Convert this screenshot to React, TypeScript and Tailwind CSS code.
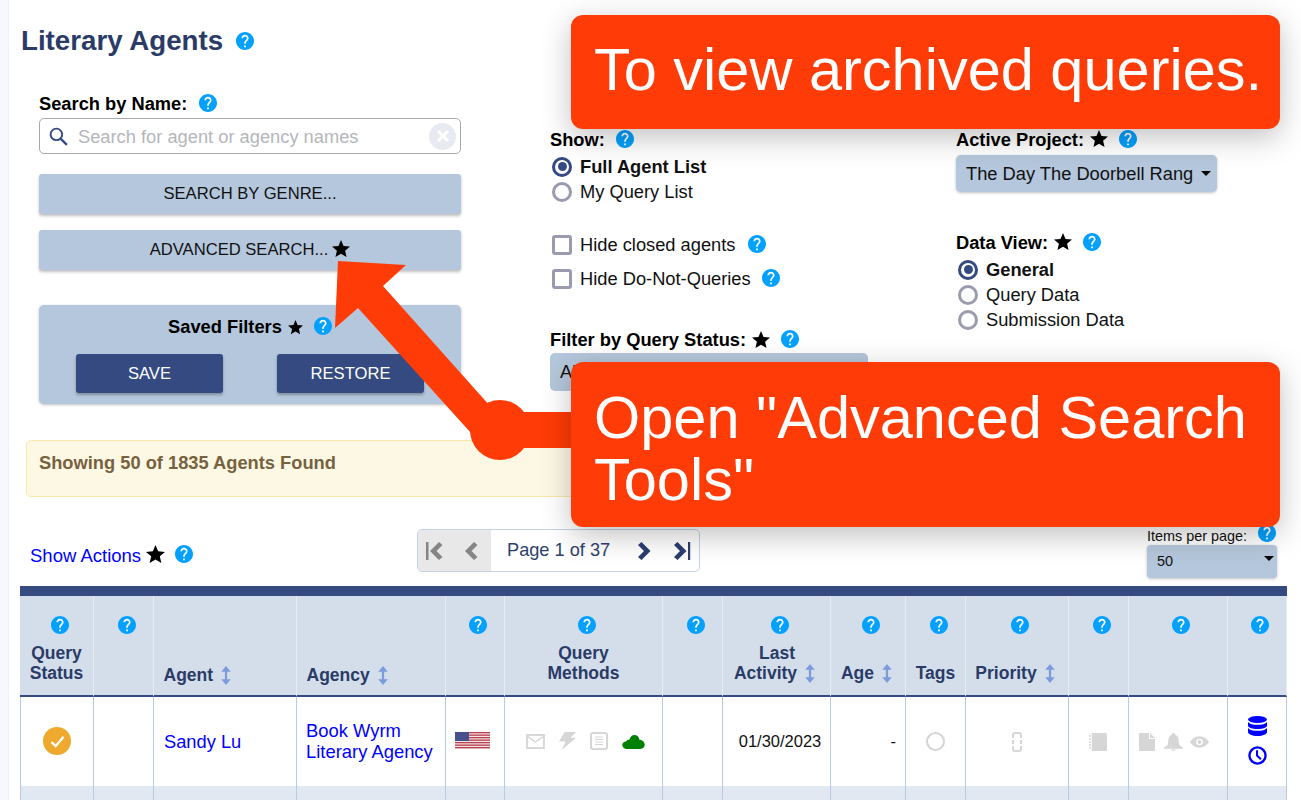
import type { ReactNode } from 'react';

function Help({ className = '' }: { className?: string }) {
  return (
    <svg viewBox="2 2 20 20" className={`w-[18px] h-[18px] shrink-0 ${className}`}>
      <circle cx="12" cy="12" r="8" fill="#fff" />
      <path
        fill="#03a1ff"
        d="M12 2C6.48 2 2 6.48 2 12s4.48 10 10 10 10-4.48 10-10S17.52 2 12 2zm1 17h-2v-2h2v2zm2.07-7.75l-.9.92C13.45 12.9 13 13.5 13 15h-2v-.5c0-1.1.45-2.1 1.17-2.83l1.24-1.26c.37-.36.59-.86.59-1.41 0-1.1-.9-2-2-2s-2 .9-2 2H8c0-2.21 1.79-4 4-4s4 1.79 4 4c0 .88-.36 1.68-.93 2.25z"
      />
    </svg>
  );
}

function Star({ className = 'w-[20px] h-[20px]' }: { className?: string }) {
  return (
    <svg viewBox="2 2 20 20" className={`shrink-0 ${className}`}>
      <path fill="#000" d="M12 17.27L18.18 21l-1.64-7.03L22 9.24l-7.19-.61L12 2 9.19 8.63 2 9.24l5.46 4.73L5.82 21z" />
    </svg>
  );
}

function Sort() {
  return (
    <svg viewBox="0 0 10 20" className="w-[10px] h-[19px] shrink-0">
      <path fill="#7c9bdc" d="M5 0l5 6H6.2v8H10l-5 6-5-6h3.8V6H0z" />
    </svg>
  );
}

function Caret() {
  return (
    <svg viewBox="0 0 10 5" className="w-[10px] h-[5px] shrink-0">
      <path fill="#000" d="M0 0h10L5 5z" />
    </svg>
  );
}

function Radio({ checked, label }: { checked?: boolean; label: string }) {
  return (
    <div className="flex items-center h-[25px]">
      <div
        className={`w-[20px] h-[20px] rounded-full border-[3px] flex items-center justify-center ml-[2px] ${
          checked ? 'border-[#344a80]' : 'border-[#9a9bae]'
        }`}
      >
        {checked && <div className="w-[9px] h-[9px] rounded-full bg-[#344a80]" />}
      </div>
      <span className={`ml-[8px] text-[18.3px] text-[#111] ${checked ? 'font-bold' : ''}`}>{label}</span>
    </div>
  );
}

function Check({ label, gap }: { label: string; gap: string }) {
  return (
    <div className="flex items-center h-[34px]">
      <div className="w-[20px] h-[20px] rounded-[3px] border-[3px] border-[#9a9bae] ml-[2px]" />
      <span className="ml-[8px] text-[18.3px] text-[#111]">{label}</span>
      <Help className={gap} />
    </div>
  );
}

function Label({ children }: { children: ReactNode }) {
  return <div className="flex items-center h-[22px] text-[18.3px] font-bold text-black">{children}</div>;
}

function HeadCell({ help = true, width, children }: { help?: boolean; width: string; children?: ReactNode }) {
  return (
    <div className={`${width} shrink-0 h-[101px] bg-[#d4deea] border-r border-r-[#e6ecf3] border-b-2 border-b-[#344a80] flex flex-col items-center`}>
      <div className="h-[38px] pt-[20px] pl-[6px]">{help && <Help />}</div>
      <div className="mt-auto mb-[12px] text-[17.5px] leading-[20px] font-bold text-[#2a3b67] text-center">{children}</div>
    </div>
  );
}

function BodyCell({ width, className = '', children }: { width: string; className?: string; children?: ReactNode }) {
  return <div className={`${width} shrink-0 h-[89px] border-r border-r-[#b7cadf] flex items-center ${className}`}>{children}</div>;
}

const widths = [
  'w-[74px]',
  'w-[60px]',
  'w-[143px]',
  'w-[149px]',
  'w-[59px]',
  'w-[158px]',
  'w-[60px]',
  'w-[108px]',
  'w-[75px]',
  'w-[60px]',
  'w-[103px]',
  'w-[60px]',
  'w-[99px]',
  'w-[59px]',
];

function Flag() {
  const stripes = [0, 1, 2, 3, 4, 5, 6];
  return (
    <svg viewBox="0 0 35 17" className="w-[35px] h-[17px]">
      <rect width="35" height="17" fill="#f3e4e6" />
      {stripes.map((s) => (
        <rect key={s} y={s * 2.5} width="35" height="1.3" fill="#b8404f" />
      ))}
      <rect width="14" height="9" fill="#47508a" />
    </svg>
  );
}

export default function App() {
  return (
    <div className="relative flex w-[1301px] h-[800px] overflow-hidden bg-white font-['Liberation_Sans',Arial,sans-serif]">
      <div className="w-[9px] shrink-0 bg-[#f6f8fd] border-r border-r-[#eff2f9]" />

      <div className="flex-1 min-w-0">
        <div className="h-[92px] pl-[12px] pt-[25px] flex items-start">
          <h1 className="text-[27.7px] leading-[32px] font-bold text-[#2a3b67]">Literary Agents</h1>
          <Help className="ml-[13px] mt-[7px]" />
        </div>

        {/* filters */}
        <div className="flex pl-[30px]">
          <div className="w-[422px] shrink-0">
            <div className="flex items-center h-[24px]">
              <span className="text-[18.3px] font-bold text-black">Search by Name:</span>
              <Help className="ml-[12px] -mt-[3px]" />
            </div>
            <div className="mt-[2px] h-[36px] rounded-[5px] border border-[#a9a9a9] flex items-center pl-[8px] pr-[4px]">
              <svg viewBox="0 0 20 20" className="w-[21px] h-[21px] shrink-0">
                <circle cx="8" cy="8" r="5.5" fill="none" stroke="#344a80" strokeWidth="1.8" />
                <path d="M12.2 12.2L18 18" stroke="#344a80" strokeWidth="2.2" />
              </svg>
              <input
                readOnly
                placeholder="Search for agent or agency names"
                className="ml-[9px] pt-[1px] flex-1 min-w-0 text-[18.3px] outline-none placeholder:text-[#b4b6bc]"
              />
              <div className="w-[27px] h-[27px] rounded-full bg-[#e8eaf2] flex items-center justify-center">
                <svg viewBox="0 0 14 14" className="w-[14px] h-[14px]">
                  <path d="M2 2l10 10M12 2L2 12" stroke="#fff" strokeWidth="3" />
                </svg>
              </div>
            </div>
            <div className="mt-[20px] h-[40px] rounded-[3px] bg-[#b5c7dc] shadow-[0_2px_3px_rgba(0,0,0,0.25)] flex items-center justify-center text-[16.6px] text-[#111]">
              SEARCH BY GENRE...
            </div>
            <div className="mt-[16px] h-[40px] rounded-[3px] bg-[#b5c7dc] shadow-[0_2px_3px_rgba(0,0,0,0.25)] flex items-center justify-center text-[16.6px] text-[#111]">
              ADVANCED SEARCH...
              <Star className="w-[18px] h-[18px] ml-[4px] -mt-[2px]" />
            </div>
            <div className="mt-[35px] h-[99px] rounded-[5px] bg-[#b5c7dc] shadow-[0_1px_3px_rgba(0,0,0,0.25)] pt-[11px]">
              <div className="flex items-center justify-center h-[22px] text-[18.3px] font-bold text-black">
                Saved Filters
                <Star className="w-[15px] h-[15px] ml-[6px]" />
                <Help className="ml-[11px] -mt-[2px]" />
              </div>
              <div className="flex mt-[16px] pl-[37px] gap-[54px]">
                <div className="w-[147px] h-[39px] pt-[1px] rounded-[3px] bg-[#344a80] shadow-[0_2px_3px_rgba(0,0,0,0.3)] flex items-center justify-center text-[16.6px] text-white">
                  SAVE
                </div>
                <div className="w-[147px] h-[39px] pt-[1px] rounded-[3px] bg-[#344a80] shadow-[0_2px_3px_rgba(0,0,0,0.3)] flex items-center justify-center text-[16.6px] text-white">
                  RESTORE
                </div>
              </div>
            </div>
          </div>

          <div className="w-[406px] shrink-0 ml-[89px] pt-[37px]">
            <Label>
              Show:
              <Help className="ml-[11px] -mt-[3px]" />
            </Label>
            <div className="mt-[3px]">
              <Radio checked label="Full Agent List" />
              <Radio label="My Query List" />
            </div>
            <div className="mt-[24px]">
              <Check label="Hide closed agents" gap="ml-[12px] -mt-[2px]" />
              <Check label="Hide Do-Not-Queries" gap="ml-[11px] -mt-[3px]" />
            </div>
            <div className="mt-[33px]">
              <Label>
                Filter by Query Status:
                <Star className="w-[18px] h-[18px] ml-[6px] -mt-[1px]" />
                <Help className="ml-[11px] -mt-[2px]" />
              </Label>
            </div>
            <div className="mt-[2px] w-[318px] h-[38px] rounded-[5px] bg-[#b5c7dc] flex items-center pl-[10px] text-[18.3px] text-[#111]">
              All
            </div>
          </div>

          <div className="flex-1 pt-[37px]">
            <Label>
              Active Project:
              <Star className="w-[18px] h-[18px] ml-[6px] -mt-[2px]" />
              <Help className="ml-[11px] -mt-[3px]" />
            </Label>
            <div className="mt-[4px] w-[261px] h-[37px] rounded-[5px] bg-[#b5c7dc] shadow-[0_1px_3px_rgba(0,0,0,0.25)] flex items-center pl-[10px] text-[18.3px] text-[#111]">
              The Day The Doorbell Rang
              <span className="ml-[8px]">
                <Caret />
              </span>
            </div>
            <div className="mt-[40px]">
              <Label>
                Data View:
                <Star className="w-[18px] h-[18px] ml-[6px] -mt-[2px]" />
                <Help className="ml-[11px] -mt-[2px]" />
              </Label>
            </div>
            <div className="mt-[3px]">
              <Radio checked label="General" />
              <Radio label="Query Data" />
              <Radio label="Submission Data" />
            </div>
          </div>
        </div>

        {/* results count */}
        <div className="mt-[36px] ml-[17px] w-[1254px] h-[57px] rounded-[5px] bg-[#fdf8e4] border border-[#f8e9a9] pl-[12px] pt-[8px]">
          <span className="text-[18.3px] font-bold text-[#77623f]">Showing 50 of 1835 Agents Found</span>
        </div>

        {/* actions and paging */}
        <div className="flex h-[89px] pl-[21px]">
          <div className="w-[387px] shrink-0 pt-[48px] flex items-start">
            <a className="text-[18.5px] leading-[22px] text-[#0000ff]">Show Actions</a>
            <Star className="w-[19px] h-[19px] ml-[5px]" />
            <Help className="ml-[10px]" />
          </div>
          <div className="mt-[32px] w-[283px] h-[43px] rounded-[5px] border border-[#c3d2e6] flex items-stretch overflow-hidden">
            <div className="w-[73px] shrink-0 bg-[#e8e8e8] flex items-center pl-[8px]">
              <svg viewBox="0 0 17 18" className="w-[17px] h-[18px]">
                <path fill="#858585" d="M0 0h2.5v18H0zM13 0l3.5 3-6 6 6 6-3.5 3-9-9z" />
              </svg>
              <svg viewBox="0 0 13 18" className="w-[13px] h-[18px] ml-[22px]">
                <path fill="#858585" d="M9 0l3.5 3-6 6 6 6L9 18 0 9z" />
              </svg>
            </div>
            <div className="flex items-center flex-1 pl-[16px] text-[18.2px] text-[#2e3f6e]">
              Page 1 of 37
              <svg viewBox="0 0 13 18" className="w-[13px] h-[18px] ml-[28px]">
                <path fill="#2c3e70" d="M3.5 0l9 9-9 9L0 15l6-6-6-6z" />
              </svg>
              <svg viewBox="0 0 17 18" className="w-[17px] h-[18px] ml-[23px]">
                <path fill="#2c3e70" d="M3.5 0l9 9-9 9L0 15l6-6-6-6zM14 0h2.2v18H14z" />
              </svg>
            </div>
          </div>
          <div className="ml-[447px] w-[130px] shrink-0">
            <div className="flex items-start h-[48px] text-[14.4px] text-[#111] pt-[31px]">
              <span className="leading-[16px]">Items per page:</span>
              <Help className="ml-[11px] -mt-[4px]" />
            </div>
            <div className="h-[33px] rounded-[4px] bg-[#b5c7dc] shadow-[0_1px_3px_rgba(0,0,0,0.25)] flex items-center pl-[10px] pr-[3px] text-[14.5px] text-[#111]">
              50
              <span className="ml-auto -mt-[6px]">
                <Caret />
              </span>
            </div>
          </div>
        </div>

        {/* agents table */}
        <div className="ml-[11px] w-[1267px]">
          <div className="h-[10px] bg-[#344a80]" />
          <div className="flex">
            <HeadCell width={widths[0]}>
              Query
              <br />
              Status
            </HeadCell>
            <HeadCell width={widths[1]} />
            <HeadCell width={widths[2]} help={false}>
              <div className="flex items-center justify-start w-[143px] pl-[10px] gap-[8px] -mb-[2px]">
                Agent <Sort />
              </div>
            </HeadCell>
            <HeadCell width={widths[3]} help={false}>
              <div className="flex items-center justify-start w-[149px] pl-[10px] gap-[8px] -mb-[2px]">
                Agency <Sort />
              </div>
            </HeadCell>
            <HeadCell width={widths[4]} />
            <HeadCell width={widths[5]}>
              Query
              <br />
              Methods
            </HeadCell>
            <HeadCell width={widths[6]} />
            <HeadCell width={widths[7]}>
              <div className="pl-[5px] mr-[4px]">Last</div>
              <div className="flex items-center gap-[8px] mr-[4px]">
                Activity <Sort />
              </div>
            </HeadCell>
            <HeadCell width={widths[8]}>
              <div className="flex items-center gap-[8px] mr-[3px]">
                Age <Sort />
              </div>
            </HeadCell>
            <HeadCell width={widths[9]}>Tags</HeadCell>
            <HeadCell width={widths[10]}>
              <div className="flex items-center gap-[8px] mr-[4px]">
                Priority <Sort />
              </div>
            </HeadCell>
            <HeadCell width={widths[11]} />
            <HeadCell width={widths[12]} />
            <HeadCell width={widths[13]} />
          </div>

          <div className="flex bg-white">
            <BodyCell width={widths[0]} className="justify-center border-l border-l-[#b7cadf] pb-[1px]">
              <div className="w-[28px] h-[28px] rounded-full bg-[#eea92f] flex items-center justify-center">
                <svg viewBox="0 0 16 14" className="w-[15px] h-[13px]">
                  <path d="M1.5 7.5l4.5 4.5L14.5 2" fill="none" stroke="#fff" strokeWidth="2.5" />
                </svg>
              </div>
            </BodyCell>
            <BodyCell width={widths[1]} />
            <BodyCell width={widths[2]} className="pl-[10px] text-[18.3px] text-[#0000ff]">
              Sandy Lu
            </BodyCell>
            <BodyCell width={widths[3]} className="pl-[9px] pb-[2px] text-[18.4px] leading-[21px] text-[#0000ff]">
              <span>
                Book Wyrm
                <br />
                Literary Agency
              </span>
            </BodyCell>
            <BodyCell width={widths[4]} className="pl-[9px] pb-[2px]">
              <Flag />
            </BodyCell>
            <BodyCell width={widths[5]} className="pl-[21px]">
              <svg viewBox="0 0 20 16" className="w-[19px] h-[15px]">
                <rect x="1" y="1" width="18" height="14" fill="none" stroke="#d6d6d6" strokeWidth="2" />
                <path d="M1.5 2.5l8.5 6 8.5-6" fill="none" stroke="#d6d6d6" strokeWidth="1.5" />
              </svg>
              <svg viewBox="0 0 20 20" className="w-[19px] h-[19px] ml-[13px] -mt-[3px]">
                <path fill="#d6d6d6" d="M7 1h12l-6 6h6L4 20l4-9H1z" />
              </svg>
              <svg viewBox="0 0 18 18" className="w-[18px] h-[18px] ml-[13px] -mt-[1px]">
                <rect x="1" y="1" width="16" height="16" rx="2" fill="none" stroke="#d6d6d6" strokeWidth="2" />
                <path d="M5 5h8M5 7.5h8M5 10h8M5 12.5h8" stroke="#d6d6d6" strokeWidth="1" />
              </svg>
              <svg viewBox="0 0 24 15" className="w-[23px] h-[14px] ml-[14px]">
                <path fill="#008000" d="M5 15C2 15 0 13 0 10.7 0 8.5 1.8 7 4 7 4.5 5.5 6 4.8 7.5 5 8.5 2 10.5 0 13 0c3 0 5 2 5.3 5C21.5 5 24 7.5 24 10.5 24 13 22 15 19 15z" />
              </svg>
            </BodyCell>
            <BodyCell width={widths[6]} />
            <BodyCell width={widths[7]} className="justify-center pl-[7px] text-[16.5px] text-[#111]">
              01/30/2023
            </BodyCell>
            <BodyCell width={widths[8]} className="justify-end pr-[9px] text-[16.5px] text-[#111]">
              -
            </BodyCell>
            <BodyCell width={widths[9]} className="justify-center">
              <div className="w-[19px] h-[19px] rounded-full border-2 border-[#d4d4d4]" />
            </BodyCell>
            <BodyCell width={widths[10]} className="justify-center">
              <svg viewBox="0 0 12 20" className="w-[12px] h-[20px]">
                <path
                  d="M2 6V3a2 2 0 012-2h4a2 2 0 012 2v3M2 8v4M10 8v4M2 14v3a2 2 0 002 2h4a2 2 0 002-2v-3"
                  fill="none"
                  stroke="#d6d6d6"
                  strokeWidth="2"
                />
              </svg>
            </BodyCell>
            <BodyCell width={widths[11]} className="justify-center pr-[2px]">
              <svg viewBox="0 0 18 18" className="w-[18px] h-[18px]">
                <rect x="2" y="0" width="16" height="18" rx="1.5" fill="#d6d6d6" />
                <path d="M0 3h4M0 6h4M0 9h4M0 12h4M0 15h4" stroke="#d6d6d6" strokeWidth="1.5" />
                <path d="M2.5 1v16" stroke="#fff" strokeWidth="0.8" />
              </svg>
            </BodyCell>
            <BodyCell width={widths[12]} className="pl-[10px]">
              <svg viewBox="0 0 16 18" className="w-[16px] h-[18px]">
                <path fill="#d6d6d6" d="M1 0h9v6h6v11a1 1 0 01-1 1H1a1 1 0 01-1-1V1a1 1 0 011-1zM11 0l5 5h-5z" />
              </svg>
              <svg viewBox="0 0 20 19" className="w-[19px] h-[18px] ml-[9px]">
                <path fill="#d6d6d6" d="M10 0a1.8 1.8 0 011.8 1.8C15 3 15.5 6 15.5 9c0 3 1 4.5 4.5 6.5v1H0v-1c3.5-2 4.5-3.5 4.5-6.5 0-3 .5-6 3.7-7.2A1.8 1.8 0 0110 0zM7.5 17.500h5a2.5 1.5 0 01-5 0z" />
              </svg>
              <svg viewBox="0 0 20 12" className="w-[19px] h-[12px] ml-[7px]">
                <path fill="#d6d6d6" fillRule="evenodd" d="M10 0c4.5 0 8 3 10 6-2 3-5.5 6-10 6S2 9 0 6c2-3 5.5-6 10-6zm0 2.5a3.5 3.5 0 100 7 3.5 3.5 0 000-7zm0 1.5a2 2 0 110 4 2 2 0 010-4z" />
              </svg>
            </BodyCell>
            <BodyCell width={widths[13]} className="flex-col justify-center gap-[10px] pl-[1px] pb-[2px]">
              <svg viewBox="0 0 19 20" className="w-[19px] h-[20px]">
                <ellipse cx="9.5" cy="3.5" rx="9.5" ry="3.5" fill="#0000ff" />
                <path fill="#0000ff" d="M0 6c1.5 2 5 2.8 9.500 2.8S17.500 8 19 6v3.500C19 11.500 15 13 9.500 13S0 11.500 0 9.500zM0 12c1.500 2 5 2.800 9.500 2.800S17.500 14 19 12v4c0 2-4 4-9.500 4S0 18 0 16z" />
              </svg>
              <svg viewBox="0 0 20 20" className="w-[19px] h-[19px]">
                <circle cx="10" cy="10" r="8.5" fill="none" stroke="#0000ff" strokeWidth="2.5" />
                <path d="M9.5 4.5V10l4 4" fill="none" stroke="#0000ff" strokeWidth="2.2" />
              </svg>
            </BodyCell>
          </div>

          <div className="flex h-[20px] bg-[#e2e8f2]">
            {widths.map((w, i) => (
              <div key={i} className={`${w} shrink-0 h-full border-r border-r-[#b7cadf] ${i === 0 ? 'border-l border-l-[#b7cadf]' : ''}`} />
            ))}
          </div>
        </div>
      </div>

      {/* annotations over the page */}
      <svg viewBox="0 0 1301 800" className="absolute inset-0 w-[1301px] h-[800px] pointer-events-none">
        <path fill="#ff3b07" d="M338 261L406 265 383 286 490 406V412H580V448H500L471 433 358 308 335 328z" />
        <circle cx="500" cy="430" r="30" fill="#ff3b07" />
      </svg>
      <div className="absolute left-[571px] top-[15px] w-[709px] h-[114px] rounded-[12px] bg-[#ff3b07] shadow-[0_8px_30px_rgba(0,0,0,0.25)] pl-[23px] pt-[24px] text-[59.5px] leading-[62px] text-white">
        To view archived queries.
      </div>
      <div className="absolute left-[571px] top-[362px] w-[709px] h-[165px] rounded-[12px] bg-[#ff3b07] shadow-[0_8px_30px_rgba(0,0,0,0.25)] pl-[23px] pt-[25px] text-[59.5px] leading-[62px] text-white">
        Open "Advanced Search
        <br />
        Tools"
      </div>
    </div>
  );
}
